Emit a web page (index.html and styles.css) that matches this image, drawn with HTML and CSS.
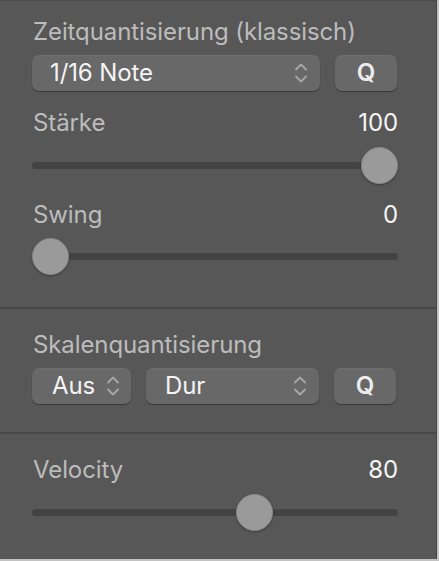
FILE: index.html
```html
<!DOCTYPE html>
<html lang="de">
<head>
<meta charset="utf-8">
<link rel="stylesheet" href="styles.css">
</head>
<body>
<div class="panel">
  <section class="sec sec-time">
    <div class="title">Zeitquantisierung (klassisch)</div>
    <div class="row">
      <div class="popup popup-note"><span>1/16 Note</span>
        <svg class="chev" width="14" height="22" viewBox="0 0 14 22"><path d="M2 7.5 L7 2.5 L12 7.5 M2 14.5 L7 19.5 L12 14.5" fill="none" stroke="#a8a8a8" stroke-width="1.8" stroke-linecap="round" stroke-linejoin="round"/></svg>
      </div>
      <div class="btn">Q</div>
    </div>
    <div class="param">
      <div class="phead"><span class="lbl">Stärke</span><span class="val">100</span></div>
      <div class="slider"><div class="track"></div><div class="knob" style="left:calc(100% - 37px)"></div></div>
    </div>
    <div class="param param-swing">
      <div class="phead"><span class="lbl">Swing</span><span class="val">0</span></div>
      <div class="slider"><div class="track"></div><div class="knob" style="left:0"></div></div>
    </div>
  </section>
  <section class="sec sec-scale">
    <div class="title">Skalenquantisierung</div>
    <div class="row">
      <div class="popup popup-aus"><span>Aus</span>
        <svg class="chev" width="14" height="22" viewBox="0 0 14 22"><path d="M2 7.5 L7 2.5 L12 7.5 M2 14.5 L7 19.5 L12 14.5" fill="none" stroke="#a8a8a8" stroke-width="1.8" stroke-linecap="round" stroke-linejoin="round"/></svg>
      </div>
      <div class="popup popup-dur"><span>Dur</span>
        <svg class="chev" width="14" height="22" viewBox="0 0 14 22"><path d="M2 7.5 L7 2.5 L12 7.5 M2 14.5 L7 19.5 L12 14.5" fill="none" stroke="#a8a8a8" stroke-width="1.8" stroke-linecap="round" stroke-linejoin="round"/></svg>
      </div>
      <div class="btn">Q</div>
    </div>
  </section>
  <section class="sec sec-vel">
    <div class="param">
      <div class="phead"><span class="lbl">Velocity</span><span class="val">80</span></div>
      <div class="slider"><div class="track"></div><div class="knob" style="left:55.8%"></div></div>
    </div>
  </section>
</div>
</body>
</html>
```
FILE: styles.css
```css
html, body {
  margin: 0;
  padding: 0;
  background: #c2c2c2;
}
body {
  font-family: Inter, "Liberation Sans", sans-serif;
  font-size: 24px;
  letter-spacing: -0.1px;
  line-height: 28px;
}
.panel {
  box-sizing: border-box;
  width: 437px;
  height: 559px;
  background: #575757;
  border-top: 1px solid #4b4b4b;
  border-right: 1px solid #444;
  display: flex;
  flex-direction: column;
}
.sec {
  padding: 0 38px 0 32px;
  border-bottom: 2px solid #474747;
}
.sec-time { padding-top: 17px; padding-bottom: 32px; }
.sec-scale { padding-top: 22px; padding-bottom: 28px; }
.sec-vel { padding-top: 22px; border-bottom: none; flex: 1; }
.title {
  color: #bcbcbc;
  padding-left: 1px;
}
.row {
  display: flex;
  gap: 15px;
  margin-top: 9px;
}
.popup {
  box-sizing: border-box;
  height: 36px;
  border-radius: 7px;
  background: #686868;
  box-shadow: 0 1px 1px rgba(0,0,0,0.35), inset 0 1px 0 rgba(255,255,255,0.04);
  display: flex;
  align-items: center;
  justify-content: space-between;
  color: #f4f4f4;
  padding: 0 12px 0 18px;
}
.popup-note { width: 288px; }
.popup-aus { width: 99px; padding-left: 20px; padding-right: 11px; }
.popup-dur { width: 173px; padding-left: 19px; }
.chev { display: block; }
.btn {
  box-sizing: border-box;
  width: 62px;
  height: 36px;
  border-radius: 7px;
  background: #686868;
  box-shadow: 0 1px 1px rgba(0,0,0,0.35), inset 0 1px 0 rgba(255,255,255,0.04);
  color: #ececec;
  font-weight: 600;
  display: flex;
  align-items: center;
  justify-content: center;
}
.param { margin-top: 18px; }
.param-swing { margin-top: 17px; }
.sec-vel .param { margin-top: 0; }
.phead {
  display: flex;
  justify-content: space-between;
}
.lbl { color: #bcbcbc; padding-left: 1px; }
.val { color: #f4f4f4; }
.slider {
  position: relative;
  height: 37px;
  margin-top: 10px;
}
.param-swing .slider { margin-top: 9px; }
.track {
  position: absolute;
  left: 0;
  right: 0;
  top: 15px;
  height: 7px;
  border-radius: 4px;
  background: #434343;
}
.knob {
  position: absolute;
  top: 0;
  width: 37px;
  height: 37px;
  box-sizing: border-box;
  border-radius: 50%;
  background: #9a9a9a;
  border: 1px solid #8a8a8a;
  box-shadow: 0 1px 2px rgba(0,0,0,0.35);
}
```
